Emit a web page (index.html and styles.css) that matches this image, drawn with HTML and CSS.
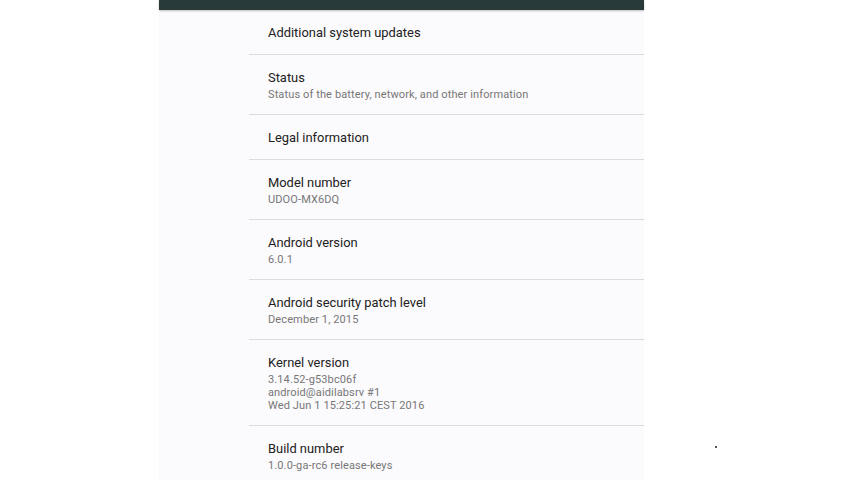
FILE: index.html
```html
<!DOCTYPE html>
<html lang="en">
<head>
  <meta charset="UTF-8">
  <title>About device</title>
  <link rel="stylesheet" href="styles.css">
</head>
<body>
  <div class="screen">
    <div class="toolbar"></div>
    <ul class="prefs">
      <li class="pref pref-single pref-first">
        <div class="pref-title">Additional system updates</div>
      </li>
      <li class="pref">
        <div class="pref-title">Status</div>
        <div class="pref-summary">Status of the battery, network, and other information</div>
      </li>
      <li class="pref pref-single">
        <div class="pref-title">Legal information</div>
      </li>
      <li class="pref">
        <div class="pref-title">Model number</div>
        <div class="pref-summary">UDOO-MX6DQ</div>
      </li>
      <li class="pref">
        <div class="pref-title">Android version</div>
        <div class="pref-summary">6.0.1</div>
      </li>
      <li class="pref">
        <div class="pref-title">Android security patch level</div>
        <div class="pref-summary">December 1, 2015</div>
      </li>
      <li class="pref">
        <div class="pref-title">Kernel version</div>
        <div class="pref-summary">3.14.52-g53bc06f<br>android@aidilabsrv #1<br>Wed Jun 1 15:25:21 CEST 2016</div>
      </li>
      <li class="pref">
        <div class="pref-title">Build number</div>
        <div class="pref-summary">1.0.0-ga-rc6 release-keys</div>
      </li>
    </ul>
  </div>
  <span class="speck"></span>
</body>
</html>
```

FILE: styles.css
```css
/* Base */
html, body {
  margin: 0;
  height: 100%;
  overflow: hidden;
  background-color: #fff;
  font-family: Roboto, "Liberation Sans", sans-serif;
}
.screen {
  width: 485px;
  height: 100%;
  margin-left: 159px;
  background-color: #fbfafc;
  position: relative;
}
.toolbar {
  height: 10px;
  background-color: #283a3a;
  box-shadow: 0 1px 2px rgba(0,0,0,0.25);
  position: relative;
  z-index: 1;
}
/* Preference list */
.prefs {
  list-style: none;
  margin: 0 0 0 90px;
  padding: 0;
}
.pref {
  padding: 14px 0 13px 19px;
  border-bottom: 1px solid #dcdcdd;
}
.pref-single {
  padding-bottom: 12px;
}
.pref-first {
  padding-top: 14px;
  padding-bottom: 12px;
}
.pref-title {
  font-size: 12.9px;
  line-height: 18px;
  color: #212121;
}
.pref-summary {
  margin-top: 1px;
  font-size: 11px;
  line-height: 13px;
  letter-spacing: 0.12px;
  color: #777;
}
/* Stray pixel at the right */
.speck {
  position: absolute;
  left: 715px;
  top: 446px;
  width: 2px;
  height: 2px;
  background-color: #555;
}
```
